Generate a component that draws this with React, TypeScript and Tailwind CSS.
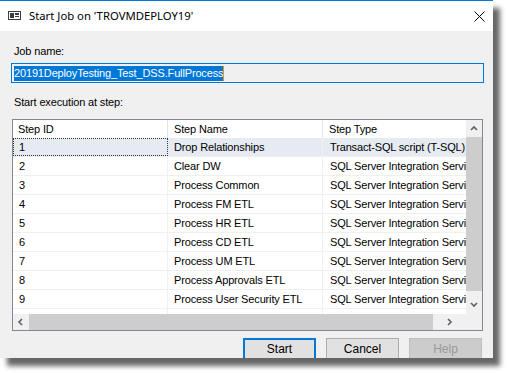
import React from 'react'

const rows: [string, string, string][] = [
  ['1', 'Drop Relationships', 'Transact-SQL script (T-SQL)'],
  ['2', 'Clear DW', 'SQL Server Integration Services Package'],
  ['3', 'Process Common', 'SQL Server Integration Services Package'],
  ['4', 'Process FM ETL', 'SQL Server Integration Services Package'],
  ['5', 'Process HR ETL', 'SQL Server Integration Services Package'],
  ['6', 'Process CD ETL', 'SQL Server Integration Services Package'],
  ['7', 'Process UM ETL', 'SQL Server Integration Services Package'],
  ['8', 'Process Approvals ETL', 'SQL Server Integration Services Package'],
  ['9', 'Process User Security ETL', 'SQL Server Integration Services Package'],
  ['10', 'Process Reporting ETL', 'SQL Server Integration Services Package'],
]

const Chevron = ({ dir }: { dir: 'up' | 'down' | 'left' | 'right' }) => {
  const pts = {
    up: '1,5 4,2 7,5',
    down: '1,2 4,5 7,2',
    left: '5,1 2,4 5,7',
    right: '2,1 5,4 2,7',
  }[dir]
  return (
    <svg width="8" height="8" viewBox="0 0 8 8">
      <polyline points={pts} fill="none" stroke="#606060" strokeWidth="1.6" />
    </svg>
  )
}

export default function App() {
  return (
    <div className="w-[508px] h-[373px] bg-white relative overflow-hidden" style={{ fontFamily: '"Liberation Sans", Arial, sans-serif' }}>
      {/* dialog */}
      <div className="w-[493px] h-[358px] bg-[#f0f0f0] flex flex-col shadow-[7px_8px_5px_rgba(0,0,0,0.6)] overflow-hidden">
        {/* title bar */}
        <div className="h-[31px] shrink-0 bg-white border-t border-[#0078d7] flex items-center">
          <svg width="13" height="9" viewBox="0 0 13 9" className="ml-[8px] mt-[-1px]">
            <rect x="0.5" y="0.5" width="12" height="8" fill="#fff" stroke="#3c3c3c" />
            <rect x="2" y="2" width="4" height="5" fill="#3c3c3c" />
            <rect x="7" y="2" width="4" height="2" fill="#3c3c3c" />
            <rect x="7" y="5" width="4" height="1" fill="#3c3c3c" />
          </svg>
          <span className="ml-[8px] text-[11.3px] text-black" style={{ fontFamily: '"Noto Sans", "Open Sans", sans-serif' }}>
            Start Job on 'TROVMDEPLOY19'
          </span>
          <svg width="11" height="11" viewBox="0 0 11 11" className="ml-auto mr-[8px]">
            <path d="M0.5 0.5 L10.5 10.5 M10.5 0.5 L0.5 10.5" stroke="#000" strokeWidth="1" />
          </svg>
        </div>

        {/* body */}
        <div className="flex flex-col text-[11px] leading-[13px] tracking-[-0.15px] text-black">
          <div className="pt-[14px] pl-[14px]">Job name:</div>
          <div className="mt-[5px] ml-[11px] w-[473px] h-[20px] border border-[#0078d7] bg-[#f0f0f0] flex items-center pl-[2px]">
            <span className="bg-[#0078d7] text-white leading-[15px] h-[15px]">20191DeployTesting_Test_DSS.FullProcess</span>
            <span className="w-px h-[15px] bg-[#ff8c00]" />
          </div>
          <div className="mt-[13px] pl-[14px]">Start execution at step:</div>

          {/* list */}
          <div className="mt-[10px] ml-[12px] w-[471px] h-[212px] border border-[#828790] bg-white flex flex-col">
            <div className="flex h-[194px]">
              <div className="flex-1 overflow-hidden">
                <div className="flex h-[18px] items-center">
                  <div className="w-[155px] h-full pl-[5px] flex items-center border-r border-[#e5e5e5]">Step ID</div>
                  <div className="w-[155px] h-full pl-[6px] flex items-center border-r border-[#e5e5e5]">Step Name</div>
                  <div className="flex-1 h-full pl-[6px] flex items-center whitespace-nowrap">Step Type</div>
                </div>
                {rows.map((r, i) => (
                  <div key={r[0]} className={`flex h-[19px] border-b border-[#f0f0f0] whitespace-nowrap ${i === 0 ? 'bg-[#e5ebf1]' : ''}`}>
                    <div className={`w-[155px] shrink-0 pl-[6px] flex items-center border-r border-[#f0f0f0] ${i === 0 ? 'outline-1 outline-dotted outline-[#333] -outline-offset-1' : ''}`}>{r[0]}</div>
                    <div className="w-[155px] shrink-0 pl-[6px] flex items-center border-r border-[#f0f0f0]">{r[1]}</div>
                    <div className="flex-1 pl-[7px] flex items-center overflow-hidden">{r[2]}</div>
                  </div>
                ))}
              </div>
              {/* vertical scrollbar */}
              <div className="w-[16px] bg-[#f0f0f0] flex flex-col items-center">
                <div className="h-[17px] flex items-center justify-center"><Chevron dir="up" /></div>
                <div className="w-[16px] h-[154px] bg-[#cdcdcd]" />
                <div className="flex-1 flex items-end justify-center pb-[5px]"><Chevron dir="down" /></div>
              </div>
            </div>
            {/* horizontal scrollbar */}
            <div className="flex h-[16px] bg-[#f0f0f0]">
              <div className="w-[16px] flex items-center justify-center"><Chevron dir="left" /></div>
              <div className="w-[404px] bg-[#cdcdcd]" />
              <div className="flex-1 flex items-center justify-center"><Chevron dir="right" /></div>
              <div className="w-[16px] bg-[#f0f0f0]" />
            </div>
          </div>

          {/* buttons */}
          <div className="mt-[7px] flex text-[12px] tracking-normal">
            <div className="ml-[243px] w-[73px] h-[22px] border-2 border-[#0078d7] bg-[#e1e1e1] flex items-center justify-center">Start</div>
            <div className="ml-[10px] w-[73px] h-[22px] border border-[#adadad] bg-[#e1e1e1] flex items-center justify-center">Cancel</div>
            <div className="ml-[10px] w-[73px] h-[22px] border border-[#bfbfbf] bg-[#cccccc] text-[#999] flex items-center justify-center">Help</div>
          </div>
        </div>
      </div>
    </div>
  )
}
